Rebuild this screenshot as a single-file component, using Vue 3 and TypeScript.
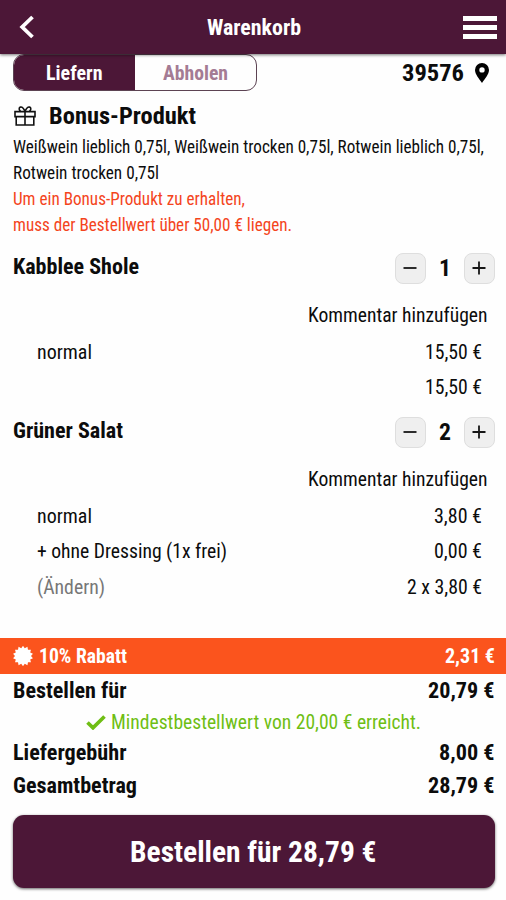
<script setup lang="ts">
import { h, type FunctionalComponent } from 'vue'

interface LabelProps {
  t: string
  w: number
  s?: number
  b?: boolean
}

// Condensed text label: the glyphs are fitted to a fixed width.
const Fit: FunctionalComponent<LabelProps> = (p) => {
  const size = p.s ?? 20
  return h('svg', { class: 'fit', width: p.w, height: 24 }, [
    h(
      'text',
      {
        x: 0,
        y: 11.5 + size * 0.355,
        'font-size': size,
        'font-weight': p.b ? 700 : 400,
        textLength: p.w,
        lengthAdjust: 'spacingAndGlyphs',
      },
      p.t,
    ),
  ])
}
Fit.props = { t: String, w: Number, s: Number, b: Boolean }

interface Label {
  t: string
  w: number
}
interface Line {
  left?: Label
  muted?: boolean
  right: Label
}
interface Item {
  name: Label
  qty: Label
  lines: Line[]
}

const wines: Label[] = [
  { t: 'Weißwein lieblich 0,75l, Weißwein trocken 0,75l, Rotwein lieblich 0,75l,', w: 471 },
  { t: 'Rotwein trocken 0,75l', w: 146 },
]
const hints: Label[] = [
  { t: 'Um ein Bonus-Produkt zu erhalten,', w: 232 },
  { t: 'muss der Bestellwert über 50,00 € liegen.', w: 279 },
]
const items: Item[] = [
  {
    name: { t: 'Kabblee Shole', w: 126 },
    qty: { t: '1', w: 12 },
    lines: [
      { left: { t: 'normal', w: 55 }, right: { t: '15,50 €', w: 57 } },
      { right: { t: '15,50 €', w: 57 } },
    ],
  },
  {
    name: { t: 'Grüner Salat', w: 110 },
    qty: { t: '2', w: 12 },
    lines: [
      { left: { t: 'normal', w: 55 }, right: { t: '3,80 €', w: 48 } },
      { left: { t: '+ ohne Dressing (1x frei)', w: 190 }, right: { t: '0,00 €', w: 48 } },
      { left: { t: '(Ändern)', w: 68 }, muted: true, right: { t: '2 x 3,80 €', w: 75 } },
    ],
  },
]

// Scalloped outline of the discount badge.
const badge = Array.from({ length: 28 }, (_, i) => {
  const r = i % 2 ? 8 : 10.2
  const a = (i * Math.PI) / 14
  return `${(10 + r * Math.sin(a)).toFixed(2)},${(10 - r * Math.cos(a)).toFixed(2)}`
}).join(' ')
</script>

<template>
  <div class="app">
    <header class="bar">
      <svg class="back" width="16" height="24" viewBox="0 0 16 24">
        <path d="M13.500 2 3.200 12l10.300 10" fill="none" stroke="#fff" stroke-width="3.800" />
      </svg>
      <Fit t="Warenkorb" :w="94" :s="22.5" b />
      <div class="burger"><i></i><i></i><i></i></div>
    </header>

    <div class="delivery">
      <div class="tabs">
        <div class="tab on"><Fit t="Liefern" :w="56.5" :s="20" b /></div>
        <div class="tab"><Fit t="Abholen" :w="65" :s="20" b /></div>
      </div>
      <div class="zip">
        <Fit t="39576" :w="62" :s="23" b />
        <svg width="14" height="20" viewBox="0 0 14 20">
          <path fill-rule="evenodd" d="M7 0a7 7 0 0 1 7 7c0 4.200-4 8.500-7 13C4 15.500 0 11.200 0 7a7 7 0 0 1 7-7Zm0 4.200a2.700 2.700 0 1 0 0 5.400 2.700 2.700 0 0 0 0-5.400Z" />
        </svg>
      </div>
    </div>

    <section class="bonus">
      <div class="bonus-title">
        <svg width="22" height="20" viewBox="0 0 22 20" fill="none" stroke="#111" stroke-width="1.600">
          <path d="M1 5.600h20v5H1zM2.200 10.600V19h17.600v-8.400M11 5.600V19" />
          <path d="M11 5.400C9.500 2 7.800 .800 6.500 1.100c-1.900.5-1.600 3.500.3 4.300M11 5.400c1.500-3.400 3.200-4.600 4.500-4.300 1.900.5 1.600 3.500-.3 4.300" />
        </svg>
        <Fit t="Bonus-Produkt" :w="147" :s="23" b />
      </div>
      <div v-for="l in wines" :key="l.t" class="para"><Fit :t="l.t" :w="l.w" :s="17.6" /></div>
      <div v-for="l in hints" :key="l.t" class="para hint"><Fit :t="l.t" :w="l.w" :s="17.6" /></div>
    </section>

    <main class="cart">
      <article v-for="item in items" :key="item.name.t" class="item">
        <div class="head">
          <div class="name"><Fit :t="item.name.t" :w="item.name.w" :s="22" b /></div>
          <div class="stepper">
            <button class="step" aria-label="−">
              <svg width="14" height="14"><path d="M0.500 7h13" /></svg>
            </button>
            <Fit :t="item.qty.t" :w="item.qty.w" :s="23" b />
            <button class="step" aria-label="+">
              <svg width="14" height="14"><path d="M0.500 7h13M7 .500v13" /></svg>
            </button>
          </div>
        </div>
        <div class="comment"><Fit t="Kommentar hinzufügen" :w="179.5" /></div>
        <div v-for="(l, i) in item.lines" :key="i" class="line">
          <div :class="{ muted: l.muted }"><Fit v-if="l.left" :t="l.left.t" :w="l.left.w" /></div>
          <Fit :t="l.right.t" :w="l.right.w" />
        </div>
      </article>
    </main>

    <footer>
      <div class="discount">
        <div class="with-icon">
          <svg width="20" height="20" viewBox="0 0 20 20"><polygon :points="badge" fill="#fff" /></svg>
          <Fit t="10% Rabatt" :w="88" b />
        </div>
        <Fit t="2,31 €" :w="50" b />
      </div>
      <div class="sum first"><Fit t="Bestellen für" :w="113.5" :s="22" b /><Fit t="20,79 €" :w="66.5" :s="22" b /></div>
      <div class="minimum">
        <svg width="20" height="15" viewBox="0 0 20 15">
          <path d="M1.500 7.500 7 12.800 18.500 1.500" fill="none" stroke="#6fbe14" stroke-width="3.700" />
        </svg>
        <Fit t="Mindestbestellwert von 20,00 € erreicht." :w="310" />
      </div>
      <div class="sum"><Fit t="Liefergebühr" :w="113.5" :s="22" b /><Fit t="8,00 €" :w="55.5" :s="22" b /></div>
      <div class="sum"><Fit t="Gesamtbetrag" :w="124" :s="22" b /><Fit t="28,79 €" :w="66.5" :s="22" b /></div>
      <button class="order"><Fit t="Bestellen für 28,79 €" :w="246.5" :s="30" b /></button>
    </footer>
  </div>
</template>

<style>
body {
  margin: 0;
  background: #fff;
}
.fit {
  display: block;
  flex: none;
  overflow: visible;
  fill: currentColor;
}
</style>

<style scoped>
.app {
  width: 506px;
  height: 900px;
  overflow: hidden;
  box-sizing: border-box;
  font-family: 'Roboto Condensed', Roboto, sans-serif;
  font-stretch: condensed;
  color: #0c0c0c;
  background: #fefefe;
}
.app svg {
  flex: none;
}
button {
  font: inherit;
  border: 0;
  padding: 0;
  display: flex;
  align-items: center;
  justify-content: center;
}
.bar {
  position: relative;
  z-index: 1;
  height: 54px;
  box-sizing: border-box;
  padding: 0 9px 0 19px;
  display: flex;
  align-items: center;
  justify-content: space-between;
  background: #4c1737;
  color: #fff;
  box-shadow: 0 1px 3px rgba(0, 0, 0, 0.55);
}
.bar .back {
  margin-right: 9.5px;
}
.burger {
  width: 34px;
  display: flex;
  flex-direction: column;
  gap: 4px;
}
.burger i {
  height: 5px;
  background: #fff;
}
.delivery {
  height: 37px;
  padding: 0 17px 0 13px;
  display: flex;
  align-items: center;
  justify-content: space-between;
}
.tabs {
  width: 244px;
  height: 37px;
  box-sizing: border-box;
  display: flex;
  overflow: hidden;
  border: 1px solid #5c4353;
  border-radius: 11px;
}
.tab {
  flex: 1;
  display: flex;
  align-items: center;
  justify-content: center;
  color: #a47b94;
}
.tab.on {
  background: #4c1737;
  color: #fff;
}
.zip {
  display: flex;
  align-items: center;
  gap: 11px;
}
.bonus {
  padding: 6px 13px 0 12.5px;
}
.bonus-title {
  height: 37px;
  display: flex;
  align-items: center;
  gap: 13px;
  padding-left: 1.5px;
}
.para {
  height: 26px;
  display: flex;
  align-items: center;
}
.hint {
  color: #f4441c;
}
.cart {
  height: 388px;
  padding-top: 12px;
}
.item {
  padding: 0 11.5px 9px 12.5px;
}
.head {
  height: 36px;
  display: flex;
  align-items: center;
  justify-content: space-between;
}
.name {
  padding-bottom: 3px;
}
.stepper {
  display: flex;
  align-items: center;
  gap: 13px;
}
.step {
  width: 31px;
  height: 31px;
  background: #efefef;
  border: 1px solid #dedede;
  border-radius: 8px;
}
.step path {
  stroke: #161616;
  stroke-width: 1.8;
}
.comment {
  height: 36px;
  margin: 11px 7.5px 1px 0;
  display: flex;
  align-items: center;
  justify-content: flex-end;
}
.line {
  height: 35.5px;
  padding: 0 12.5px 0 24.5px;
  display: flex;
  align-items: center;
  justify-content: space-between;
}
.muted {
  color: #777;
}
.discount {
  height: 36px;
  padding: 0 11.5px 0 12.5px;
  display: flex;
  align-items: center;
  justify-content: space-between;
  background: #fb541d;
  color: #fff;
}
.with-icon {
  display: flex;
  align-items: center;
  gap: 6px;
}
.sum {
  height: 33px;
  padding: 0 11.5px 0 12.5px;
  display: flex;
  align-items: center;
  justify-content: space-between;
}
.sum.first {
  height: 34px;
}
.minimum {
  height: 28px;
  display: flex;
  align-items: center;
  justify-content: center;
  gap: 5px;
  color: #6fbe14;
}
.order {
  width: 482px;
  height: 73px;
  margin: 13px 0 0 12.5px;
  border-radius: 11px;
  background: #4c1737;
  color: #fff;
  box-shadow: 0 1px 3px rgba(0, 0, 0, 0.6);
}
</style>
